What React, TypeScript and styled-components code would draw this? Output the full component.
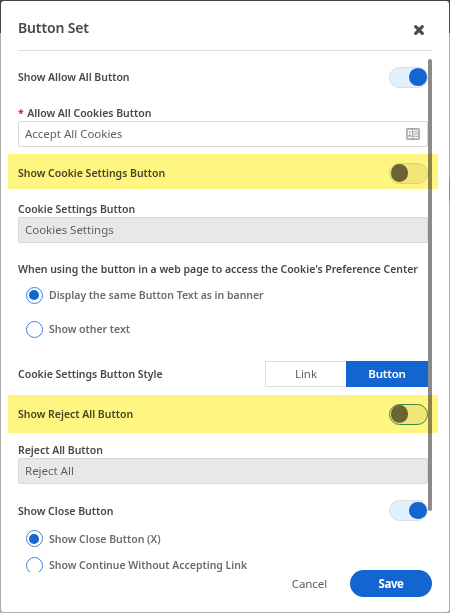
import React from "react";
import styled, { createGlobalStyle, css } from "styled-components";

const GlobalStyle = createGlobalStyle`
  * { box-sizing: border-box; }
  body { margin: 0; overflow: hidden; font-family: "Noto Sans", "Open Sans", sans-serif; color: #484848; }
  button, input { font: inherit; color: inherit; margin: 0; }
`;

const Backdrop = styled.div`
  width: 450px;
  height: 613px;
  padding: 1px 2px 1px 1px;
  background:
    linear-gradient(#444 33px, transparent 33px) 0 0 / 100% 100% no-repeat,
    linear-gradient(transparent 179px, #66a45a 179px, #66a45a 201px, transparent 201px) 100% 0 / 1px 100% no-repeat,
    #adadad;
`;

const Dialog = styled.section`
  display: flex;
  flex-direction: column;
  width: 447.5px;
  height: 611px;
  padding-left: 1px;
  border-radius: 3px;
  background: #fff;
`;

const Header = styled.header`
  display: flex;
  flex: none;
  align-items: center;
  justify-content: space-between;
  height: 50px;
  margin: 0 16.5px 0 16px;
  padding: 5px 7px 0 0;
  border-bottom: 1.5px solid #dedede;
`;

const Title = styled.h1`
  margin: 0;
  font-size: 14px;
  line-height: 20px;
  font-weight: 600;
  letter-spacing: -0.15px;
`;

const CloseButton = styled.button`
  display: flex;
  margin-top: 3px;
  padding: 0;
  border: 0;
  background: none;
`;

const Body = styled.div`
  position: relative;
  flex: none;
  height: 521px;
  padding: 0 20.5px 0 16px;
  overflow: hidden;
`;

const ScrollThumb = styled.div`
  position: absolute;
  z-index: 1;
  top: 8px;
  right: 16.5px;
  width: 4px;
  height: 452px;
  border-radius: 2px;
  background: #8b898a;
`;

const Row = styled.div<{ $height: number; $top?: number; $highlight?: boolean; $shift?: number }>`
  position: relative;
  display: flex;
  align-items: center;
  justify-content: space-between;
  height: ${(p) => p.$height}px;
  margin-top: ${(p) => p.$top ?? 0}px;
  padding-top: ${(p) => p.$shift ?? 0}px;
  ${(p) =>
    p.$highlight &&
    css`
      &::after {
        content: "";
        position: absolute;
        z-index: 2;
        inset: 0 -10px 0 -10.5px;
        background: #fff581;
        mix-blend-mode: multiply;
        pointer-events: none;
      }
    `}
`;

const Label = styled.span`
  font-size: 10.5px;
  line-height: 16px;
  font-weight: 600;
  white-space: nowrap;
  letter-spacing: -0.02px;
`;

const Required = styled.span`
  margin-right: 3.5px;
  color: #e3000f;
`;

const Field = styled.div<{ $disabled?: boolean }>`
  display: flex;
  align-items: center;
  justify-content: space-between;
  height: 26px;
  padding: 0 7px 0 6px;
  border: 1px solid #d8d8d8;
  border-radius: 2px;
  background: ${(p) => (p.$disabled ? "#e8e8e8" : "#fff")};
  color: #606060;
`;

const FieldInput = styled.input`
  flex: 1;
  min-width: 0;
  padding: 0;
  border: 0;
  outline: 0;
  background: transparent;
  font-size: 11.5px;
  line-height: 18px;
  letter-spacing: -0.02px;
`;

const Switch = styled.button<{ $on?: boolean; $focused?: boolean }>`
  display: flex;
  align-items: center;
  justify-content: ${(p) => (p.$on ? "flex-end" : "flex-start")};
  width: 39px;
  height: 21px;
  padding: 0 0.5px;
  border: 1px solid ${(p) => (p.$focused ? "#3f8c96" : "#dcdcdc")};
  border-radius: 11px;
  background: ${(p) => (p.$on ? "#e1f2fe" : "#f2f0ee")};
  &::before {
    content: "";
    width: 17.5px;
    height: 17.5px;
    border-radius: 50%;
    background: ${(p) => (p.$on ? "#1366d0" : "#6a6864")};
  }
`;

const RadioRow = styled.label<{ $height: number; $top?: number }>`
  display: flex;
  align-items: center;
  gap: 6.5px;
  height: ${(p) => p.$height}px;
  margin-top: ${(p) => p.$top ?? 0}px;
  padding-left: 7.5px;
  color: #6c6c6a;
`;

const RadioMark = styled.span<{ $checked?: boolean }>`
  display: flex;
  align-items: center;
  justify-content: center;
  width: 17px;
  height: 17px;
  border: 1px solid #3f81dc;
  border-radius: 50%;
  &::before {
    content: "";
    width: 10px;
    height: 10px;
    border-radius: 50%;
    background: ${(p) => (p.$checked ? "#1366d0" : "transparent")};
  }
`;

const Segments = styled.div`
  display: flex;
`;

const Segment = styled.button<{ $active?: boolean }>`
  width: ${(p) => (p.$active ? 82 : 81)}px;
  height: 26px;
  padding: 0;
  border: 1px solid ${(p) => (p.$active ? "#1366d0" : "#dcdcdc")};
  border-right-width: ${(p) => (p.$active ? 1 : 0)}px;
  background: ${(p) => (p.$active ? "#1366d0" : "#fff")};
  color: ${(p) => (p.$active ? "#fff" : "#606060")};
  font-size: 11.5px;
  font-weight: ${(p) => (p.$active ? 600 : 400)};
  letter-spacing: ${(p) => (p.$active ? -0.2 : 0)}px;
  line-height: 18px;
`;

const Footer = styled.footer`
  position: relative;
  display: flex;
  flex: 1;
  align-items: flex-start;
  justify-content: flex-end;
  gap: 23px;
  margin-top: -2px;
  padding-right: 16.5px;
`;

const FooterButton = styled.button<{ $primary?: boolean }>`
  height: 27px;
  width: ${(p) => (p.$primary ? "82px" : "auto")};
  padding: 0;
  border: 0;
  border-radius: 14px;
  background: ${(p) => (p.$primary ? "#1366d0" : "transparent")};
  color: ${(p) => (p.$primary ? "#fff" : "#5c5c5c")};
  font-size: 11.5px;
  font-weight: ${(p) => (p.$primary ? 700 : 400)};
  letter-spacing: ${(p) => (p.$primary ? -0.4 : -0.1)}px;
`;

const CloseIcon = () => (
  <svg width="12" height="12" viewBox="0 0 12 12">
    <path d="M2.7 2.7 9.3 9.3M9.3 2.7 2.7 9.3" stroke="#4a4a4a" strokeWidth="3.2" strokeLinecap="round" />
  </svg>
);

const ContactIcon = () => (
  <svg width="14" height="12" viewBox="0 0 14 12" fill="none" stroke="#a6a6a6">
    <rect x="0.9" y="0.9" width="12.2" height="10.2" rx="0.8" strokeWidth="1.6" />
    <path d="M6.5 1v10M7 3.8h6M7 6h6M7 8.2h6" strokeWidth="1.1" />
    <circle cx="3.8" cy="4.3" r="1" fill="#a6a6a6" stroke="none" />
    <path d="M2 8.8c0-3.4 3.6-3.4 3.6 0z" fill="#a6a6a6" stroke="none" />
  </svg>
);

export default function App() {
  return (
    <Backdrop>
      <GlobalStyle />
      <Dialog role="dialog" aria-label="Button Set">
        <Header>
          <Title>Button Set</Title>
          <CloseButton aria-label="Close"><CloseIcon /></CloseButton>
        </Header>
        <Body>
          <ScrollThumb />
          <Row $height={52}>
            <Label>Show Allow All Button</Label>
            <Switch $on aria-label="Show Allow All Button" />
          </Row>
          <Row $height={16} $top={2}>
            <Label><Required>*</Required>Allow All Cookies Button</Label>
          </Row>
          <Field>
            <FieldInput defaultValue="Accept All Cookies" />
            <ContactIcon />
          </Field>
          <Row $height={35} $top={7} $shift={3} $highlight>
            <Label>Show Cookie Settings Button</Label>
            <Switch aria-label="Show Cookie Settings Button" />
          </Row>
          <Row $height={16} $top={12}>
            <Label>Cookie Settings Button</Label>
          </Row>
          <Field $disabled>
            <FieldInput defaultValue="Cookies Settings" readOnly />
          </Field>
          <Row $height={18} $top={17}>
            <Label>When using the button in a web page to access the Cookie's Preference Center</Label>
          </Row>
          <RadioRow $height={34}>
            <RadioMark $checked />
            <Label>Display the same Button Text as in banner</Label>
          </RadioRow>
          <RadioRow $height={34}>
            <RadioMark />
            <Label>Show other text</Label>
          </RadioRow>
          <Row $height={26} $top={15}>
            <Label>Cookie Settings Button Style</Label>
            <Segments>
              <Segment>Link</Segment>
              <Segment $active>Button</Segment>
            </Segments>
          </Row>
          <Row $height={38} $top={8} $highlight>
            <Label>Show Reject All Button</Label>
            <Switch $focused aria-label="Show Reject All Button" />
          </Row>
          <Row $height={16} $top={9}>
            <Label>Reject All Button</Label>
          </Row>
          <Field $disabled>
            <FieldInput defaultValue="Reject All" readOnly />
          </Field>
          <Row $height={27} $top={13}>
            <Label>Show Close Button</Label>
            <Switch $on aria-label="Show Close Button" />
          </Row>
          <RadioRow $height={27} $top={1}>
            <RadioMark $checked />
            <Label>Show Close Button (X)</Label>
          </RadioRow>
          <RadioRow $height={26}>
            <RadioMark />
            <Label>Show Continue Without Accepting Link</Label>
          </RadioRow>
        </Body>
        <Footer>
          <FooterButton>Cancel</FooterButton>
          <FooterButton $primary>Save</FooterButton>
        </Footer>
      </Dialog>
    </Backdrop>
  );
}
